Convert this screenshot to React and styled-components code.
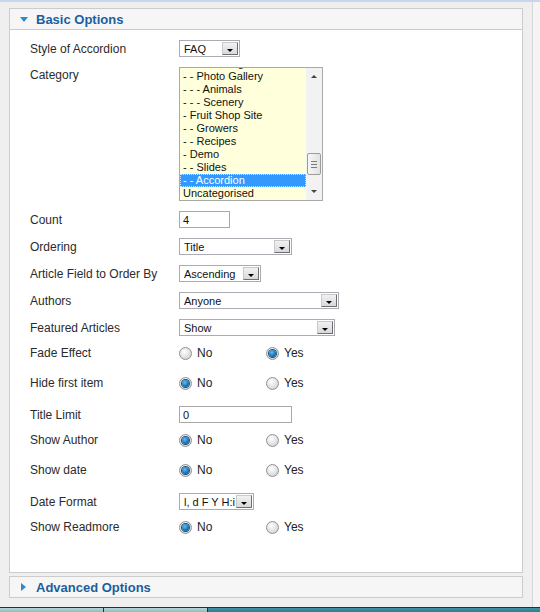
import React from "react";
import styled, { createGlobalStyle } from "styled-components";

const GlobalStyle = createGlobalStyle`
  html, body {
    margin: 0;
    padding: 0;
  }
  body {
    background: #efefef;
    font-family: "Liberation Sans", Arial, sans-serif;
    color: #2b2b2b;
  }
`;

const Page = styled.div`
  width: 540px;
  height: 612px;
  display: flex;
  flex-direction: column;
  overflow: hidden;
`;

const TopStrip = styled.div`
  height: 2px;
  background: #c7d7ec;
`;

const Workspace = styled.div`
  flex: 1;
  display: flex;
  min-height: 0;
`;

const Main = styled.div`
  width: 533px;
  box-sizing: border-box;
  border-right: 1px solid #d7d7d7;
  padding: 6px 9px 0 9px;
  display: flex;
  flex-direction: column;
  gap: 3px;
`;

const Side = styled.div`
  flex: 1;
  background: #f4f4f4;
`;

const Panel = styled.div`
  border: 1px solid #cccccc;
  background: #fff;
`;

const PanelHeader = styled.div`
  height: 20px;
  display: flex;
  align-items: center;
  padding-left: 10px;
  background: #f6f6f6;
  border-bottom: ${(p) => (p.$open ? "1px solid #cccccc" : "none")};
  font-size: 13px;
  font-weight: bold;
  color: #1b5e9e;
  svg {
    margin-right: ${(p) => (p.$open ? "8px" : "10px")};
    margin-left: ${(p) => (p.$open ? "0" : "1px")};
  }
`;

const PanelBody = styled.div`
  padding: 10px 0 22px 20px;
`;

const Row = styled.div`
  display: flex;
  align-items: ${(p) => (p.$top ? "flex-start" : "center")};
  height: ${(p) => p.$h}px;
  margin-bottom: ${(p) => p.$mb}px;
`;

const Label = styled.div`
  width: 149px;
  flex-shrink: 0;
  font-size: 12px;
  line-height: 14px;
  color: #2b2b2b;
  padding-top: ${(p) => (p.$top ? "1px" : "0")};
`;

const SelectBox = styled.div`
  width: ${(p) => p.$w}px;
  height: 17px;
  box-sizing: border-box;
  border: 1px solid #a9adb3;
  background: #fff;
  display: flex;
  align-items: center;
  padding-left: 4px;
  font-size: 11px;
  color: #111;
  white-space: nowrap;
`;

const SelectText = styled.span`
  flex: 1;
  overflow: hidden;
`;

const ArrowButton = styled.span`
  width: 16px;
  height: 13px;
  margin-right: 1px;
  box-sizing: border-box;
  border: 1px solid #6f6f6f;
  border-top-color: #c9c9c9;
  border-left-color: #c9c9c9;
  background: linear-gradient(#f1f1f1, #d9d9d9);
  display: flex;
  align-items: flex-end;
  justify-content: center;
  padding-bottom: 2px;
  &::after {
    content: "";
    border-left: 3px solid transparent;
    border-right: 3px solid transparent;
    border-top: 3px solid #000;
  }
`;

const TextInput = styled.input`
  width: ${(p) => p.$w}px;
  height: 17px;
  box-sizing: border-box;
  border: 1px solid #a9a9a9;
  padding: 0 3px;
  margin: 0;
  font-family: "Liberation Sans", Arial, sans-serif;
  font-size: 11px;
  color: #111;
  outline: none;
`;

const ListBox = styled.div`
  width: 144px;
  height: 134px;
  box-sizing: border-box;
  border: 1px solid #a9a9a9;
  background: #ffffdc;
  display: flex;
`;

const ListItems = styled.div`
  flex: 1;
  overflow: hidden;
`;

const ListInner = styled.div`
  margin-top: -11px;
`;

const ListItem = styled.div`
  height: 13px;
  line-height: 13px;
  padding-left: 3px;
  font-size: 11px;
  white-space: nowrap;
  color: ${(p) => (p.$selected ? "#fff" : "#111")};
  background: ${(p) => (p.$selected ? "#3399ff" : "transparent")};
  outline: ${(p) => (p.$selected ? "1px dotted #cfe6ff" : "none")};
  outline-offset: -1px;
`;

const ScrollBar = styled.div`
  width: 16px;
  background: #f2f2f2;
  display: flex;
  flex-direction: column;
`;

const ScrollArrow = styled.div`
  height: 17px;
  display: flex;
  align-items: center;
  justify-content: center;
  &::after {
    content: "";
    border-left: 3px solid transparent;
    border-right: 3px solid transparent;
    ${(p) =>
      p.$up ? "border-bottom: 3px solid #444;" : "border-top: 3px solid #444;"}
  }
`;

const ScrollTrack = styled.div`
  flex: 1;
  padding-top: 68px;
`;

const Thumb = styled.div`
  width: 14px;
  height: 22px;
  box-sizing: border-box;
  margin-left: 1px;
  border: 1px solid #9c9c9c;
  border-radius: 2px;
  background: linear-gradient(90deg, #f6f6f6, #e3e3e3);
  display: flex;
  flex-direction: column;
  justify-content: center;
  align-items: center;
  gap: 2px;
  span {
    width: 6px;
    height: 1px;
    background: #7b7b7b;
  }
`;

const RadioGroup = styled.div`
  display: flex;
`;

const RadioOption = styled.label`
  width: 87px;
  display: flex;
  align-items: center;
  font-size: 12px;
  color: #222;
`;

const RadioDot = styled.span`
  width: 13px;
  height: 13px;
  box-sizing: border-box;
  border-radius: 50%;
  border: 1px solid #8e9297;
  background: radial-gradient(circle at 40% 35%, #ffffff, #d6d6d6 75%);
  margin-right: 5px;
  display: flex;
  align-items: center;
  justify-content: center;
  &::after {
    content: "";
    display: ${(p) => (p.$checked ? "block" : "none")};
    width: 7px;
    height: 7px;
    border-radius: 50%;
    background: radial-gradient(circle at 40% 35%, #5fc0f5, #0d62a6 70%);
    box-shadow: 0 0 0 1px #1c4f7a;
  }
`;

const Taskbar = styled.div`
  height: 4px;
  border-top: 1px solid #173642;
  display: flex;
  background: linear-gradient(#3f93a5, #2e7c8d);
`;

const TaskButton = styled.div`
  width: 103px;
  border-right: 1px solid #173642;
  background: linear-gradient(#b7d5da, #8fbcc4);
`;

const DownTriangle = () => (
  <svg width="8" height="5" viewBox="0 0 8 5">
    <polygon points="0,0 8,0 4,5" fill="#2a8bd0" />
  </svg>
);

const RightTriangle = () => (
  <svg width="5" height="8" viewBox="0 0 5 8">
    <polygon points="0,0 5,4 0,8" fill="#2a8bd0" />
  </svg>
);

const categories = [
  "- - Park Blog",
  "- - Photo Gallery",
  "- - - Animals",
  "- - - Scenery",
  "- Fruit Shop Site",
  "- - Growers",
  "- - Recipes",
  "- Demo",
  "- - Slides",
  "- - Accordion",
  "Uncategorised",
];

function Select({ value, width }) {
  return (
    <SelectBox $w={width}>
      <SelectText>{value}</SelectText>
      <ArrowButton />
    </SelectBox>
  );
}

function Radios({ value }) {
  return (
    <RadioGroup>
      <RadioOption>
        <RadioDot $checked={value === "No"} />
        No
      </RadioOption>
      <RadioOption>
        <RadioDot $checked={value === "Yes"} />
        Yes
      </RadioOption>
    </RadioGroup>
  );
}

function Field({ label, kind, children }) {
  const radio = kind === "radio";
  return (
    <Row $h={radio ? 14 : 17} $mb={radio ? 16 : 10}>
      <Label>{label}</Label>
      {children}
    </Row>
  );
}

export default function App() {
  return (
    <Page>
      <GlobalStyle />
      <TopStrip />
      <Workspace>
        <Main>
          <Panel>
            <PanelHeader $open>
              <DownTriangle />
              Basic Options
            </PanelHeader>
            <PanelBody>
              <Field label="Style of Accordion">
                <Select value="FAQ" width={61} />
              </Field>
              <Row $h={134} $mb={10} $top>
                <Label $top>Category</Label>
                <ListBox>
                  <ListItems>
                    <ListInner>
                      {categories.map((c) => (
                        <ListItem key={c} $selected={c === "- - Accordion"}>
                          {c}
                        </ListItem>
                      ))}
                    </ListInner>
                  </ListItems>
                  <ScrollBar>
                    <ScrollArrow $up />
                    <ScrollTrack>
                      <Thumb>
                        <span />
                        <span />
                        <span />
                      </Thumb>
                    </ScrollTrack>
                    <ScrollArrow />
                  </ScrollBar>
                </ListBox>
              </Row>
              <Field label="Count">
                <TextInput $w={51} defaultValue="4" />
              </Field>
              <Field label="Ordering">
                <Select value="Title" width={113} />
              </Field>
              <Field label="Article Field to Order By">
                <Select value="Ascending" width={82} />
              </Field>
              <Field label="Authors">
                <Select value="Anyone" width={160} />
              </Field>
              <Field label="Featured Articles">
                <Select value="Show" width={156} />
              </Field>
              <Field label="Fade Effect" kind="radio">
                <Radios value="Yes" />
              </Field>
              <Field label="Hide first item" kind="radio">
                <Radios value="No" />
              </Field>
              <Field label="Title Limit">
                <TextInput $w={113} defaultValue="0" />
              </Field>
              <Field label="Show Author" kind="radio">
                <Radios value="No" />
              </Field>
              <Field label="Show date" kind="radio">
                <Radios value="No" />
              </Field>
              <Field label="Date Format">
                <Select value="l, d F Y H:i" width={75} />
              </Field>
              <Field label="Show Readmore" kind="radio">
                <Radios value="No" />
              </Field>
            </PanelBody>
          </Panel>
          <Panel>
            <PanelHeader>
              <RightTriangle />
              Advanced Options
            </PanelHeader>
          </Panel>
        </Main>
        <Side />
      </Workspace>
      <Taskbar>
        <TaskButton />
        <TaskButton />
      </Taskbar>
    </Page>
  );
}
